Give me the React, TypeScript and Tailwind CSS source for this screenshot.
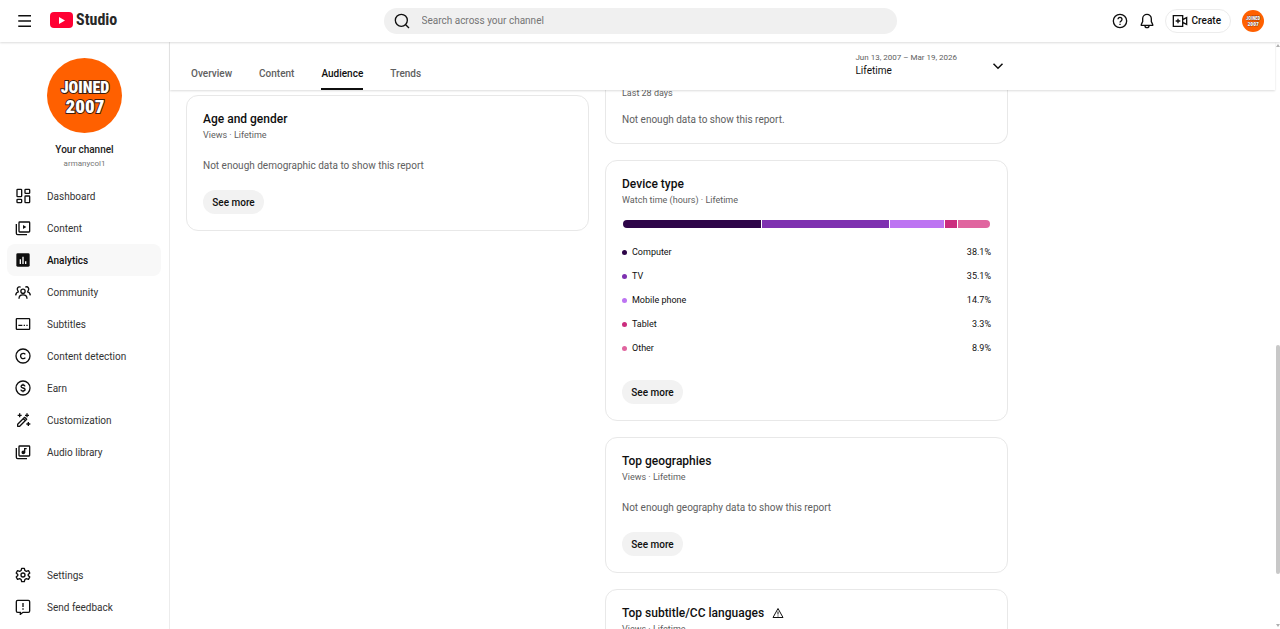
import type { ReactNode } from "react";

type IconProps = { children: ReactNode; className?: string };

function Icon({ children, className = "size-4" }: IconProps) {
  return (
    <svg
      viewBox="0 0 24 24"
      className={`${className} shrink-0`}
      fill="none"
      stroke="currentColor"
      strokeWidth="2"
      aria-hidden="true"
    >
      {children}
    </svg>
  );
}

const icons = {
  dashboard: (
    <Icon>
      <rect x="3" y="2" width="7" height="11" rx="1" />
      <rect x="15" y="2" width="7" height="6" rx="1" />
      <rect x="3" y="17" width="7" height="5" rx="1" />
      <rect x="15" y="12" width="7" height="10" rx="1" />
    </Icon>
  ),
  content: (
    <Icon>
      <rect x="6" y="3" width="16" height="15" rx="1" />
      <path d="M2 6v14a2 2 0 0 0 2 2h14" />
      <path d="M12 7.5v6l5-3z" fill="currentColor" stroke="none" />
    </Icon>
  ),
  analytics: (
    <Icon>
      <rect x="2" y="2" width="20" height="20" rx="2" fill="currentColor" stroke="none" />
      <path d="M8 11v7M12 7v11M16 14v4" stroke="white" />
    </Icon>
  ),
  community: (
    <Icon>
      <circle cx="12" cy="11" r="3.2" />
      <path d="M6 22c0-3.600 2.600-5.600 6-5.600s6 2 6 5.600" />
      <path d="M8.500 4.800A3.300 3.300 0 1 0 5 10.400M1 17c.2-3 1.800-5 5-5.600" />
      <path d="M15.500 4.800a3.300 3.300 0 1 1 3.500 5.600M23 17c-.2-3-1.800-5-5-5.600" />
    </Icon>
  ),
  subtitles: (
    <Icon>
      <rect x="2" y="4" width="20" height="16" rx="1" />
      <path d="M5 14h6M13 14h2M17 14h2" />
    </Icon>
  ),
  copyright: (
    <Icon>
      <circle cx="12" cy="12" r="10.500" />
      <path d="M15.500 9.500a4 4 0 1 0 0 5" />
    </Icon>
  ),
  earn: (
    <Icon>
      <circle cx="12" cy="12" r="10.500" />
      <path d="M15 9.500c-.3-1.300-1.500-2-3-2s-2.900.7-2.900 2.200c0 3.100 6 1.500 6 4.600 0 1.400-1.400 2.200-3.100 2.200s-3-.8-3.200-2.200M12 5.500v2M12 16.500v2" />
    </Icon>
  ),
  wand: (
    <Icon>
      <path d="M4 18.500 14.500 8l3 3L7 21.500H4zM12.500 10l3 3" strokeLinejoin="round" />
      <path d="M7 2v6M4 5h6M18 2v6M15 5h6M20 15v6M17 18h6" />
    </Icon>
  ),
  audio: (
    <Icon>
      <rect x="6" y="3" width="16" height="15" rx="1" />
      <path d="M2 6v14a2 2 0 0 0 2 2h14" />
      <circle cx="12.500" cy="12.500" r="1.800" fill="currentColor" />
      <path d="M14.500 13V7h3" />
    </Icon>
  ),
  settings: (
    <Icon>
      <path
        d="M10 2h4l.8 3.200 2.200 1.300 3.200-1 2 3.500-2.400 2.300v1.400l2.400 2.300-2 3.500-3.200-1-2.200 1.300L14 22h-4l-.8-3.200L7 17.500l-3.200 1-2-3.500 2.400-2.300v-1.400L1.800 9l2-3.500 3.200 1 2.200-1.300z"
        strokeLinejoin="round"
      />
      <circle cx="12" cy="12" r="3" />
    </Icon>
  ),
  feedback: (
    <Icon>
      <path d="M4 2h16a2 2 0 0 1 2 2v14a2 2 0 0 1-2 2h-8l-4 3v-3H4a2 2 0 0 1-2-2V4a2 2 0 0 1 2-2z" />
      <path d="M12 6v6M12 14v2" />
    </Icon>
  ),
};

const mainNav = [
  { label: "Dashboard", icon: icons.dashboard },
  { label: "Content", icon: icons.content },
  { label: "Analytics", icon: icons.analytics, active: true },
  { label: "Community", icon: icons.community },
  { label: "Subtitles", icon: icons.subtitles },
  { label: "Content detection", icon: icons.copyright },
  { label: "Earn", icon: icons.earn },
  { label: "Customization", icon: icons.wand },
  { label: "Audio library", icon: icons.audio },
];

const footerNav = [
  { label: "Settings", icon: icons.settings },
  { label: "Send feedback", icon: icons.feedback },
];

const tabs = ["Overview", "Content", "Audience", "Trends"];

const devices = [
  { name: "Computer", share: 38.1, color: "bg-[#2d0548]" },
  { name: "TV", share: 35.1, color: "bg-[#7e31b0]" },
  { name: "Mobile phone", share: 14.7, color: "bg-[#bd74f2]" },
  { name: "Tablet", share: 3.3, color: "bg-[#cb2d7e]" },
  { name: "Other", share: 8.9, color: "bg-[#e0659f]" },
];

function ChannelAvatar({ className }: { className: string }) {
  return (
    <svg viewBox="0 0 75 75" className={`${className} shrink-0`} role="img" aria-label="Channel avatar">
      <circle cx="37.500" cy="37.500" r="37.500" fill="#ff6000" />
      <g
        fontFamily="Impact, 'Roboto Condensed', 'Open Sans Condensed', Roboto, sans-serif"
        fontWeight="900"
        textAnchor="middle"
        fill="white"
        stroke="#3b1d10"
        strokeWidth="2"
        paintOrder="stroke"
      >
        <text x="38" y="35" fontSize="16">JOINED</text>
        <text x="38" y="55" fontSize="19">2007</text>
      </g>
    </svg>
  );
}

function NavItem({ label, icon, active }: { label: string; icon: ReactNode; active?: boolean }) {
  return (
    <li>
      <a
        href="#"
        aria-current={active ? "page" : undefined}
        className={`flex h-8 items-center gap-4 rounded-lg pl-2 text-[#0f0f0f] ${
          active ? "bg-[#f8f8f8] font-medium" : ""
        }`}
      >
        {icon}
        <span className={active ? "" : "text-[#333]"}>{label}</span>
      </a>
    </li>
  );
}

function SeeMore({ className }: { className: string }) {
  return (
    <button className={`h-6 w-[61px] rounded-full bg-[#f2f2f2] text-[10px] font-medium text-[#0f0f0f] ${className}`}>
      See more
    </button>
  );
}

function Card({ title, subtitle, badge, children }: { title: string; subtitle: string; badge?: ReactNode; children?: ReactNode }) {
  return (
    <section className="rounded-xl border border-[#e8e8e8] px-4 pt-[13px] pb-4">
      <h2 className="flex items-center gap-2 text-[12px] leading-5 font-medium">
        {title}
        {badge}
      </h2>
      <p className="text-[9px] leading-3 text-[#606060]">{subtitle}</p>
      {children}
    </section>
  );
}

function EmptyReport({ title, message }: { title: string; message: string }) {
  return (
    <Card title={title} subtitle="Views · Lifetime">
      <p className="mt-[17px] leading-4 text-[#606060]">{message}</p>
      <SeeMore className="mt-4" />
    </Card>
  );
}

function Header() {
  return (
    <header className="z-20 grid h-[42px] shrink-0 grid-cols-[1fr_minmax(0,513px)_1fr] items-center bg-white px-4 pb-px shadow-[0_1px_2px_rgba(0,0,0,0.14)]">
      <div className="flex items-center">
        <button aria-label="Menu">
          <Icon className="size-[18px]">
            <path d="M3 5h17M3 12h17M3 19h17" />
          </Icon>
        </button>
        <a href="#" className="ml-4 flex items-center gap-[2px]">
          <svg viewBox="0 0 24 17" className="h-[17px] w-6" aria-hidden="true">
            <rect width="23" height="16" rx="4" fill="#ff0033" />
            <path d="M9 5v7l6-3.500z" fill="white" />
          </svg>
          <span className="pb-px font-['Roboto_Condensed','Open_Sans_Condensed',Roboto,sans-serif] text-[16px] leading-5 font-bold text-[#282828]">
            Studio
          </span>
        </a>
      </div>

      <label className="flex h-[26px] items-center gap-3 rounded-full bg-[#f0f0f0] pl-[10px]">
        <Icon>
          <circle cx="11" cy="11" r="9" />
          <path d="m17.500 17.500 5 5" />
        </Icon>
        <input
          type="search"
          aria-label="Search across your channel"
          placeholder="Search across your channel"
          className="min-w-0 flex-1 bg-transparent outline-none placeholder:text-[#757575]"
        />
      </label>

      <div className="flex items-center justify-end">
        <button aria-label="Help">
          <Icon>
            <circle cx="12" cy="12" r="10" />
            <path d="M9 9.500a3 3 0 1 1 4.500 2.600c-1 .6-1.500 1-1.500 2.200M12 16v2" />
          </Icon>
        </button>
        <button aria-label="Notifications" className="ml-[11px]">
          <Icon>
            <path d="M12 2a6.500 6.500 0 0 0-6.500 6.500v4.500L3.500 17v1.500h17V17l-2-4V8.500A6.500 6.500 0 0 0 12 2z" />
            <path d="M9 19a3 3 0 0 0 6 0" />
          </Icon>
        </button>
        <button className="ml-[10px] flex h-6 items-center gap-1 rounded-full border border-[#ececec] pr-[9px] pl-[6px] font-medium">
          <Icon>
            <path d="M2 4h14v16H2zM9 8.500v7M5.500 12h7M16 10l6-3v10l-6-3" />
          </Icon>
          Create
        </button>
        <button aria-label="Account" className="ml-[11px]">
          <ChannelAvatar className="size-[22px]" />
        </button>
      </div>
    </header>
  );
}

function Sidebar() {
  return (
    <aside className="flex w-[170px] shrink-0 flex-col border-r border-[#ececec] pb-[6px]">
      <div className="flex flex-col items-center pt-4">
        <ChannelAvatar className="size-[75px]" />
        <p className="mt-[9px] leading-4 font-medium text-[#212121]">Your channel</p>
        <p className="text-[8px] leading-3 text-[#757575]">armanycol1</p>
      </div>
      <nav className="mt-[10px] flex flex-1 flex-col justify-between pr-2 pl-[7px]">
        <ul>
          {mainNav.map((item) => (
            <NavItem key={item.label} {...item} />
          ))}
        </ul>
        <ul>
          {footerNav.map((item) => (
            <NavItem key={item.label} {...item} />
          ))}
        </ul>
      </nav>
    </aside>
  );
}

function TabBar() {
  return (
    <div className="z-10 flex h-12 shrink-0 bg-white pl-[21px] shadow-[0_1px_2px_rgba(0,0,0,0.14)]">
      <div className="flex w-full max-w-[816px] justify-between">
        <div role="tablist" className="flex gap-[27px]">
          {tabs.map((tab) => {
            const active = tab === "Audience";
            return (
              <button
                key={tab}
                role="tab"
                aria-selected={active}
                className={`border-b-2 pt-4 font-medium ${
                  active ? "border-[#0f0f0f] text-[#0f0f0f]" : "border-transparent text-[#606060]"
                }`}
              >
                {tab}
              </button>
            );
          })}
        </div>
        <button className="flex items-center gap-8 text-left">
          <span className="flex flex-col pb-[2px]">
            <span className="text-[8px] leading-3 text-[#606060]">Jun 13, 2007 – Mar 19, 2026</span>
            <span className="leading-[14px]">Lifetime</span>
          </span>
          <Icon className="size-[18px]">
            <path d="m6 9 6 6 6-6" />
          </Icon>
        </button>
      </div>
    </div>
  );
}

function DeviceCard() {
  return (
    <Card title="Device type" subtitle="Watch time (hours) · Lifetime">
      <div className="mx-px mt-[14px] flex h-2 gap-px overflow-hidden rounded-full">
        {devices.map((d) => (
          <div key={d.name} className={d.color} style={{ width: `${d.share}%` }} />
        ))}
      </div>
      <table className="mt-3 w-full text-[9px] leading-3">
        <tbody>
          {devices.map((d) => (
            <tr key={d.name} className="h-6">
              <th scope="row" className="text-left font-normal">
                <span className="flex items-center gap-[5px]">
                  <span className={`size-[5px] rounded-full ${d.color}`} />
                  {d.name}
                </span>
              </th>
              <td className="text-right">{d.share}%</td>
            </tr>
          ))}
        </tbody>
      </table>
      <SeeMore className="mt-5" />
    </Card>
  );
}

function Scrollbar() {
  return (
    <div className="flex w-[5px] shrink-0 flex-col items-center py-[2px]" aria-hidden="true">
      <svg viewBox="0 0 4 3" className="h-[3px] w-1" fill="#b0b0b0">
        <path d="M0 3 2 0l2 3z" />
      </svg>
      <div className="grow-[298]" />
      <div className="w-1 grow-[229] rounded-full bg-[#c8c8c8]" />
      <div className="grow-[50]" />
      <svg viewBox="0 0 4 3" className="h-[3px] w-1" fill="#b0b0b0">
        <path d="M0 0h4L2 3z" />
      </svg>
    </div>
  );
}

export default function App() {
  return (
    <div className="flex h-screen flex-col overflow-hidden bg-white font-[Roboto,sans-serif] text-[10px] text-[#0f0f0f]">
      <Header />
      <div className="flex min-h-0 flex-1">
        <Sidebar />
        <main className="flex min-w-0 flex-1 flex-col">
          <TabBar />
          <div className="min-h-0 flex-1 overflow-hidden pl-4">
            <div className="grid max-w-[822px] grid-cols-2 items-start gap-4">
              <div className="pt-[5px]">
                <EmptyReport title="Age and gender" message="Not enough demographic data to show this report" />
              </div>
              <div className="-mt-[3px] flex flex-col gap-4">
                <section className="rounded-b-xl border border-t-0 border-[#e8e8e8] px-4 pb-[15px]">
                  <p className="text-[9px] leading-3 text-[#606060]">Last 28 days</p>
                  <p className="mt-[13px] leading-4 text-[#606060]">Not enough data to show this report.</p>
                </section>
                <DeviceCard />
                <EmptyReport title="Top geographies" message="Not enough geography data to show this report" />
                <Card
                  title="Top subtitle/CC languages"
                  subtitle="Views · Lifetime"
                  badge={
                    <Icon className="size-3">
                      <path d="M12 3 2 21h20zM12 9v6M12 17v2" />
                    </Icon>
                  }
                />
              </div>
            </div>
          </div>
        </main>
        <Scrollbar />
      </div>
    </div>
  );
}
